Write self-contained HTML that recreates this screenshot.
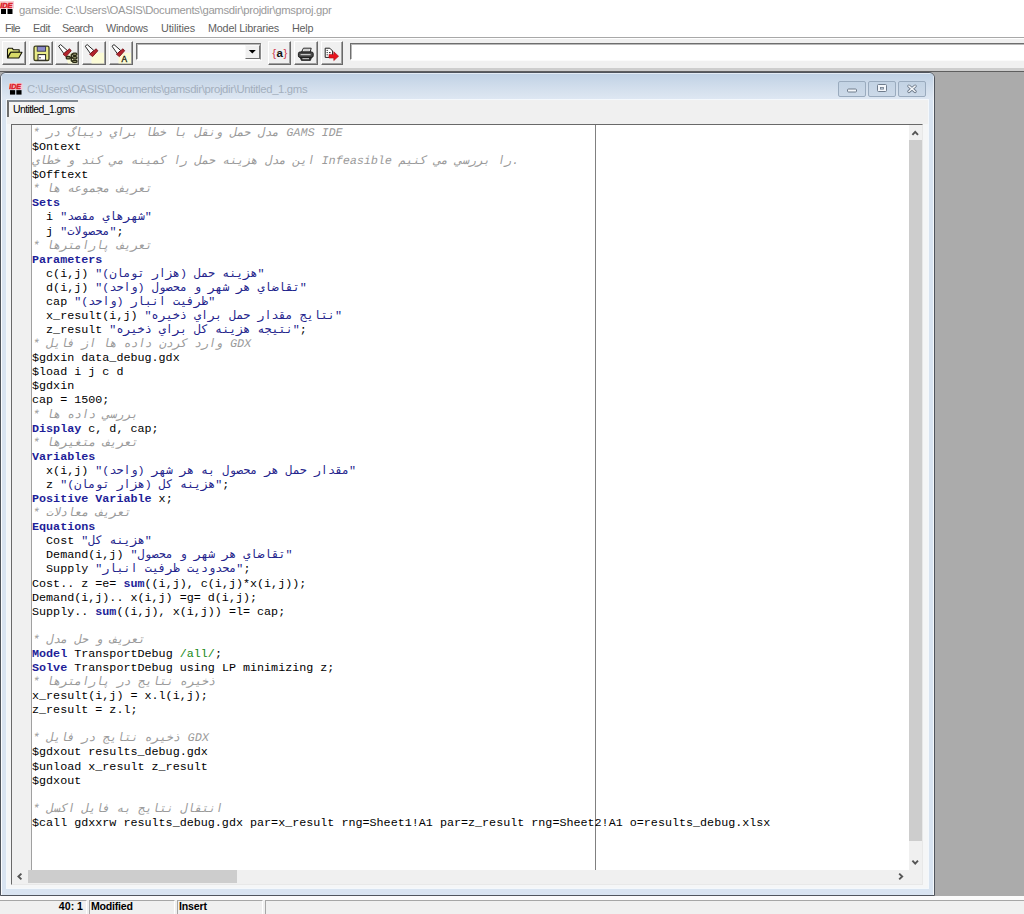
<!DOCTYPE html>
<html lang="fa" dir="ltr">
<head>
<meta charset="utf-8">
<title>gamside</title>
<style>
html,body{margin:0;padding:0;}
body{width:1024px;height:914px;position:relative;overflow:hidden;background:#fff;font-family:"Liberation Sans","DejaVu Sans",sans-serif;direction:ltr;}
.abs{position:absolute;}
/* ---------- main title + menu ---------- */
#title{left:19px;top:2.5px;font-size:11.3px;line-height:15px;color:#999;white-space:nowrap;letter-spacing:-0.311px;}
.mi{position:absolute;top:19.5px;font-size:10.8px;line-height:16px;color:#5f5f5f;white-space:nowrap;}
/* ---------- toolbar ---------- */
#tb{left:0;top:37px;width:1024px;height:31px;background:#f0f0f0;border-top:1px solid #a8a8a8;box-sizing:border-box;}
#tb:before{content:"";position:absolute;left:0;top:0;width:100%;height:1px;background:#fff;}
.btn{position:absolute;top:41px;width:24px;height:24px;box-sizing:border-box;background:#f0f0f0;border:1px solid;border-color:#fff #696969 #696969 #fff;box-shadow:inset -1px -1px 0 #a0a0a0;}
.btn svg{position:absolute;left:3px;top:3px;width:16px;height:16px;}
.sunk{position:absolute;background:#fff;box-sizing:border-box;border:1px solid;border-color:#6e6e6e #fff #fff #6e6e6e;box-shadow:inset 1px 1px 0 #b8b8b8,1px 1px 0 #fafafa;}
/* ---------- mdi ---------- */
#mdi{left:0;top:68px;width:1024px;height:828px;background:#ababab;border-top:3px solid #cdcdcd;box-sizing:border-box;}
#mdi:before{content:"";position:absolute;left:0;top:0;width:100%;height:1px;background:#5e5e5e;}
#child{left:0;top:72px;width:935px;height:824px;box-sizing:border-box;border:1px solid #50555d;border-radius:6px 6px 0 0;background:#d9e4f1;overflow:hidden;box-shadow:inset 1px 1px 0 rgba(255,255,255,.65),inset -1px 0 0 rgba(255,255,255,.5);}
#ctitle{left:0;top:0;width:933px;height:27px;background:linear-gradient(#bfd1e4,#d2deec 55%,#dfe8f3);}
#ctext{left:26px;top:9px;font-size:11.3px;line-height:15px;color:#a3afbd;white-space:nowrap;letter-spacing:-0.327px;}
.cb svg{display:block}
.cb{position:absolute;top:8px;width:28px;height:16px;box-sizing:border-box;border:1px solid #9aabbe;border-radius:2px;background:linear-gradient(#c3d3e4,#ccd9e8);}
#client{left:6px;top:27px;width:921px;height:788px;background:#f0f0f0;box-shadow:0 0 0 1px #f4f8fc;}
#tab{left:0;top:0;width:71px;height:17px;box-sizing:border-box;border-left:2px solid #6e6e6e;border-top:2px solid #808890;background:#f4f4f4;font-size:10.4px;line-height:15px;color:#000;padding-left:4px;white-space:nowrap;letter-spacing:-0.558px;}
#ed{left:4px;top:24px;width:912px;height:761px;background:#fff;box-sizing:border-box;border:1px solid;border-color:#696969 #e8e8e8 #e8e8e8 #696969;overflow:hidden;}
#gut{left:0;top:0;width:19px;height:745px;background:#f0f0f0;border-right:1px solid #a0a0a0;}
#margin{left:583px;top:0;width:1px;height:745px;background:#808080;}
#code{left:20px;top:1px;width:876px;height:745px;overflow:hidden;font-family:"Liberation Mono","DejaVu Sans Mono",monospace;font-size:11.73px;color:#000;direction:ltr;}
.ln{height:14.08px;line-height:14.08px;white-space:pre;unicode-bidi:normal;}
.cm{color:#9a9a9a;transform:skewX(-11deg);transform-origin:0 72%;}
.k{color:#1e1e98;font-weight:bold;}
.s{color:#24248c;}
.g{color:#168a16;}
.zw{display:inline-block;width:7.04px;height:1px;}
#vs{left:896.5px;top:0;width:14px;height:745px;background:#f0f0f0;}
#vth{left:0.5px;top:15px;width:12.5px;height:701px;background:#cdcdcd;}
#hs{left:0;top:745px;width:897px;height:15px;background:#f0f0f0;}
#hth{left:16px;top:0;width:208.7px;height:13px;background:#cdcdcd;}
#corner{left:896.5px;top:745px;width:14px;height:15px;background:#f0f0f0;}
/* ---------- status ---------- */
#st{left:0;top:896px;width:1024px;height:18px;background:#f0f0f0;border-top:4px solid #fbfbfb;box-sizing:border-box;}
.sp{position:absolute;top:900px;height:16px;box-sizing:border-box;border:1px solid;border-color:#a6a6a6 #fff #fff #a6a6a6;font-size:10.6px;font-weight:bold;line-height:11.5px;color:#000;white-space:nowrap;padding:0 3px;}
</style>
</head>
<body>
<!-- main window title -->
<svg class="abs" style="left:0;top:1px" width="14" height="14" viewBox="0 0 14 14">
 <rect x="0" y="0" width="14" height="7.4" fill="#f8cfd0"/>
 <text x="0.2" y="6.6" font-family="Liberation Sans,sans-serif" font-size="7.4" font-weight="bold" font-style="italic" fill="#dd1f2a" stroke="#dd1f2a" stroke-width="0.5">IDE</text>
 <rect x="1" y="8" width="5" height="5" fill="#000"/><rect x="7.5" y="8" width="5" height="5" fill="#000"/>
</svg>
<div id="title" class="abs">gamside: C:\Users\OASIS\Documents\gamsdir\projdir\gmsproj.gpr</div>
<div class="mi" style="left:5px;letter-spacing:-0.600px">File</div>
<div class="mi" style="left:33px;letter-spacing:-0.400px">Edit</div>
<div class="mi" style="left:62px;letter-spacing:-0.536px">Search</div>
<div class="mi" style="left:106px;letter-spacing:-0.259px">Windows</div>
<div class="mi" style="left:161px;letter-spacing:-0.089px">Utilities</div>
<div class="mi" style="left:208px;letter-spacing:-0.188px">Model Libraries</div>
<div class="mi" style="left:292px;letter-spacing:-0.255px">Help</div>

<!-- toolbar -->
<div id="tb" class="abs"></div>
<div class="btn" style="left:2px"></div>
<div class="btn" style="left:29px"></div>
<div class="btn" style="left:55px"></div>
<div class="btn" style="left:82px"></div>
<div class="btn" style="left:109px"></div>
<div class="sunk" style="left:136px;top:43px;width:125px;height:17px;border-right-color:#8a8a8a"></div>
<div class="btn" style="left:245px;top:45px;width:15px;height:14px;box-shadow:none;border-color:#f8f8f8 #707070 #707070 #f8f8f8"></div>
<div class="btn" style="left:268px;width:23px"></div>
<div class="btn" style="left:294px"></div>
<div class="btn" style="left:321px;width:22px"></div>
<div class="sunk" style="left:350px;top:43px;width:680px;height:17px"></div>

<!-- toolbar icons -->
<svg class="abs" style="left:0;top:38px" width="360" height="30" viewBox="0 38 360 30">
 <defs>
  <g id="torch">
   <polygon points="58.6,46.2 60.6,44.6 67.2,50.4 64.0,53.8" fill="#fff" stroke="#2a2a2a" stroke-width="1" stroke-linejoin="round"/>
   <polygon points="63.0,54.2 69.6,48.8 71.2,50.8 66.0,56.6" fill="#b5242c" stroke="#7a1218" stroke-width="0.9" stroke-linejoin="round"/>
  </g>
 </defs>
 <!-- open folder -->
 <polygon points="7.5,57.5 7.5,49.3 8.6,48.2 12.2,48.2 13.4,49.8 19.2,49.8 19.2,52.2 10.6,52.2" fill="#e6e880" stroke="#16160a" stroke-width="1.1" stroke-linejoin="round"/>
 <polygon points="7.6,58 10.8,52.2 22,52.2 18.8,58" fill="#d8da68" stroke="#16160a" stroke-width="1.1" stroke-linejoin="round"/>
 <!-- floppy -->
 <rect x="34" y="46.2" width="15" height="14.3" rx="1.6" fill="#e9eb88" stroke="#3c3c1c" stroke-width="1.3"/>
 <rect x="37.2" y="46.6" width="8.4" height="4.6" fill="#8c8ccc" stroke="#30304a" stroke-width="0.9"/>
 <rect x="38" y="54.6" width="7.6" height="5.6" fill="#fff" stroke="#222" stroke-width="1"/>
 <rect x="39.4" y="57" width="1.2" height="1.4" fill="#222"/>
 <!-- torch + tree -->
 <polygon points="66,57 71,53 77.4,53 77.4,63.4 68,63.4" fill="#fbfbd6"/>
 <use href="#torch"/>
 <g fill="#a4a474" stroke="#2a2a16" stroke-width="1.35">
  <path d="M70,57.7 H72.6 M71.3,54.2 V61.3 M71.3,54.2 H72.6 M71.3,61.3 H72.6" fill="none"/>
  <rect x="66.3" y="56.5" width="3.9" height="2.4" rx="1"/>
  <rect x="72.6" y="53.1" width="4.3" height="2.2" rx="1"/>
  <rect x="72.6" y="56.6" width="4.3" height="2.2" rx="1"/>
  <rect x="72.6" y="60.2" width="4.3" height="2.2" rx="1"/>
 </g>
 <!-- torch -->
 <polygon points="91.5,56 96,52.8 104,52.8 104,63.6 91.5,63.6" fill="#fbfbd6"/>
 <use href="#torch" x="26.6"/>
 <!-- torch + A -->
 <polygon points="118.5,56.5 123,52.8 131,52.8 131,63.6 118.5,63.6" fill="#fbfbd6"/>
 <use href="#torch" x="53.4"/>
 <text x="121.6" y="61.6" font-family="Liberation Sans,sans-serif" font-size="8.4" fill="#1c1c0a" stroke="#1c1c0a" stroke-width="0.35">A</text>
 <!-- combo arrow -->
 <polygon points="248.8,50 255.8,50 252.3,53.6" fill="#000"/>
 <!-- {a} -->
 <text x="272.2" y="57.2" font-family="Liberation Sans,sans-serif" font-size="11.5" fill="#d23a4e">{</text>
 <text x="276.6" y="56.8" font-family="Liberation Sans,sans-serif" font-size="11.5" font-weight="bold" fill="#111">a</text>
 <text x="283.6" y="57.2" font-family="Liberation Sans,sans-serif" font-size="11.5" fill="#d23a4e">}</text>
 <!-- printer -->
 <polygon points="301.6,52 303.4,48.2 311.2,48.2 310.2,52" fill="#fff" stroke="#222" stroke-width="1"/>
 <path d="M303.6,50 H309.6" stroke="#888" stroke-width="0.8"/>
 <rect x="298.4" y="52" width="14.8" height="5.4" rx="1.6" fill="#4a4a4a" stroke="#1a1a1a" stroke-width="1"/>
 <rect x="300.6" y="54" width="10" height="1.2" fill="#c8c8c8"/>
 <polygon points="300.2,57.4 311.6,57.4 310.4,60.4 301.4,60.4" fill="#333" stroke="#1a1a1a" stroke-width="0.8"/>
 <rect x="302.4" y="58.2" width="6.6" height="1" fill="#d8d8d8"/>
 <!-- export -->
 <polygon points="325.2,48.2 329.8,48.2 332.6,51 332.6,57.4 325.2,57.4" fill="#fff" stroke="#222" stroke-width="1"/>
 <path d="M326.6,50.4 h1.2 M326.6,52.6 h1.2 M326.6,54.8 h1.2 M329,52.6 h1.6" stroke="#222" stroke-width="1"/>
 <polygon points="329,54.4 333.8,54.4 333.8,51.8 338.6,56.2 333.8,60.6 333.8,58 329,58" fill="#e8141e" stroke="#a80a12" stroke-width="0.6"/>
</svg>

<!-- mdi area -->
<div id="mdi" class="abs"></div>
<div id="child" class="abs">
  <div id="ctitle" class="abs"></div>
  <div class="abs" style="left:0;top:3px;width:1px;height:820px;background:rgba(255,255,255,.7)"></div>
  <div class="abs" style="left:4px;top:0;width:925px;height:1px;background:rgba(255,255,255,.55)"></div>
  <div class="abs" style="left:932px;top:3px;width:1px;height:820px;background:rgba(255,255,255,.45)"></div>
  <div id="ctext" class="abs">C:\Users\OASIS\Documents\gamsdir\projdir\Untitled_1.gms</div>
  <svg class="abs" style="left:8px;top:10px" width="13.5" height="12.5" viewBox="0 0 14 14" preserveAspectRatio="none">
   <rect x="0" y="0" width="14" height="7.4" fill="#f6cdd0"/>
   <text x="0.2" y="6.6" font-family="Liberation Sans,sans-serif" font-size="7.4" font-weight="bold" font-style="italic" fill="#dd1f2a" stroke="#dd1f2a" stroke-width="0.5">IDE</text>
   <rect x="1" y="8" width="5.4" height="5" fill="#000"/><rect x="7.6" y="8" width="5.4" height="5" fill="#000"/>
  </svg>
  <div class="cb" style="left:837px"><svg width="26" height="14" viewBox="0 0 26 14"><rect x="8.5" y="7" width="9" height="3" rx="1" fill="#f4f7fb" stroke="#6f7c8c" stroke-width="1"/></svg></div>
  <div class="cb" style="left:867px"><svg width="26" height="14" viewBox="0 0 26 14"><rect x="8.5" y="2.5" width="9" height="7" rx="1" fill="#f4f7fb" stroke="#6f7c8c" stroke-width="1"/><rect x="11.5" y="5.5" width="3" height="1.6" fill="#c9d6e4" stroke="#6f7c8c" stroke-width="0.8"/></svg></div>
  <div class="cb" style="left:897px"><svg width="26" height="14" viewBox="0 0 26 14"><path d="M9.9,4.1 L16.1,9.5 M16.1,4.1 L9.9,9.5" stroke="#6a7787" stroke-width="3.2" stroke-linecap="round"/><path d="M9.9,4.1 L16.1,9.5 M16.1,4.1 L9.9,9.5" stroke="#f4f7fb" stroke-width="1.5" stroke-linecap="round"/></svg></div>
  <div id="client" class="abs">
    <div id="tab" class="abs">Untitled_1.gms</div>
    <div class="abs" style="left:0;top:24px;width:921px;height:764px;background:#f5f6f7"></div>
    <div id="ed" class="abs">
      <div id="gut" class="abs"></div>
      <div id="margin" class="abs"></div>
      <div id="code" class="abs">
<div class="ln cm">* مدل حمل&zwnj;<i class="zw"></i>ونقل با خطا براي ديباگ در GAMS IDE</div>
<div class="ln">$Ontext</div>
<div class="ln cm">اين مدل هزينه حمل را کمينه مي&zwnj;<i class="zw"></i>کند و خطاي Infeasible را بررسي مي&zwnj;<i class="zw"></i>کنيم.</div>
<div class="ln">$Offtext</div>
<div class="ln cm">* تعريف مجموعه&zwnj;<i class="zw"></i>ها</div>
<div class="ln"><b class="k">Sets</b></div>
<div class="ln">  i <span class="s">"شهرهاي مقصد"</span></div>
<div class="ln">  j <span class="s">"محصولات"</span>;</div>
<div class="ln cm">* تعريف پارامترها</div>
<div class="ln"><b class="k">Parameters</b></div>
<div class="ln">  c(i,j) <span class="s">"هزينه حمل (هزار تومان)"</span></div>
<div class="ln">  d(i,j) <span class="s">"تقاضاي هر شهر و محصول (واحد)"</span></div>
<div class="ln">  cap <span class="s">"ظرفيت انبار (واحد)"</span></div>
<div class="ln">  x_result(i,j) <span class="s">"نتايج مقدار حمل براي ذخيره"</span></div>
<div class="ln">  z_result <span class="s">"نتيجه هزينه کل براي ذخيره"</span>;</div>
<div class="ln cm">* وارد کردن داده&zwnj;<i class="zw"></i>ها از فايل GDX</div>
<div class="ln">$gdxin data_debug.gdx</div>
<div class="ln">$load i j c d</div>
<div class="ln">$gdxin</div>
<div class="ln">cap = 1500;</div>
<div class="ln cm">* بررسي داده&zwnj;<i class="zw"></i>ها</div>
<div class="ln"><b class="k">Display</b> c, d, cap;</div>
<div class="ln cm">* تعريف متغيرها</div>
<div class="ln"><b class="k">Variables</b></div>
<div class="ln">  x(i,j) <span class="s">"مقدار حمل هر محصول به هر شهر (واحد)"</span></div>
<div class="ln">  z <span class="s">"هزينه کل (هزار تومان)"</span>;</div>
<div class="ln"><b class="k">Positive Variable</b> x;</div>
<div class="ln cm">* تعريف معادلات</div>
<div class="ln"><b class="k">Equations</b></div>
<div class="ln">  Cost <span class="s">"هزينه کل"</span></div>
<div class="ln">  Demand(i,j) <span class="s">"تقاضاي هر شهر و محصول"</span></div>
<div class="ln">  Supply <span class="s">"محدوديت ظرفيت انبار"</span>;</div>
<div class="ln">Cost.. z =e= <b class="k">sum</b>((i,j), c(i,j)*x(i,j));</div>
<div class="ln">Demand(i,j).. x(i,j) =g= d(i,j);</div>
<div class="ln">Supply.. <b class="k">sum</b>((i,j), x(i,j)) =l= cap;</div>
<div class="ln">&nbsp;</div>
<div class="ln cm">* تعريف و حل مدل</div>
<div class="ln"><b class="k">Model</b> TransportDebug <span class="g">/all/</span>;</div>
<div class="ln"><b class="k">Solve</b> TransportDebug using LP minimizing z;</div>
<div class="ln cm">* ذخيره نتايج در پارامترها</div>
<div class="ln">x_result(i,j) = x.l(i,j);</div>
<div class="ln">z_result = z.l;</div>
<div class="ln">&nbsp;</div>
<div class="ln cm">* ذخيره نتايج در فايل GDX</div>
<div class="ln">$gdxout results_debug.gdx</div>
<div class="ln">$unload x_result z_result</div>
<div class="ln">$gdxout</div>
<div class="ln">&nbsp;</div>
<div class="ln cm">* انتقال نتايج به فايل اکسل</div>
<div class="ln">$call gdxxrw results_debug.gdx par=x_result rng=Sheet1!A1 par=z_result rng=Sheet2!A1 o=results_debug.xlsx</div>
      </div>
      <div id="vs" class="abs"><div id="vth" class="abs"></div></div>
      <div id="hs" class="abs"><div id="hth" class="abs"></div></div>
      <div id="corner" class="abs"></div>
      <svg class="abs" style="left:0;top:0" width="911" height="760" viewBox="12 125 911 760" fill="none" stroke="#555" stroke-width="1.9">
       <path d="M912.4,134.8 L915.2,131.8 L918,134.8"/>
       <path d="M912.4,860.6 L915.2,863.6 L918,860.6"/>
       <path d="M21.4,873.6 L18.4,876.5 L21.4,879.4"/>
       <path d="M899.2,873.6 L902.2,876.5 L899.2,879.4"/>
      </svg>
    </div>
  </div>
</div>

<!-- status bar -->
<div id="st" class="abs"></div>
<div class="sp" style="left:-1px;width:88px;text-align:right;padding-right:3px">40: 1</div>
<div class="sp" style="left:89px;width:86px;padding-left:1px;letter-spacing:-0.225px">Modified</div>
<div class="sp" style="left:177px;width:86px;padding-left:1px;letter-spacing:-0.185px">Insert</div>
<div class="sp" style="left:265px;width:762px"></div>
</body>
</html>
